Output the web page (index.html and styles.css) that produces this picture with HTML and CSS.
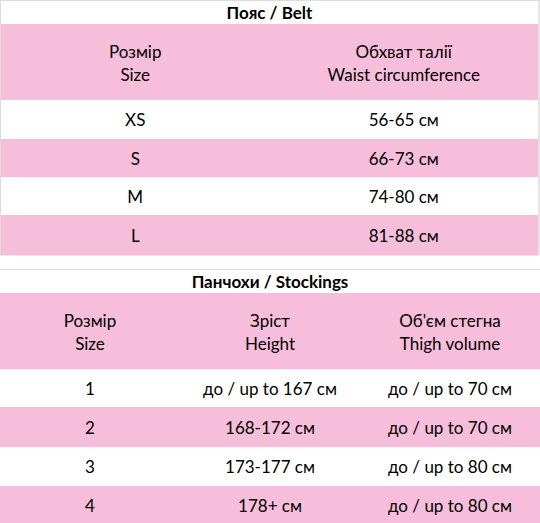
FILE: index.html
```html
<!DOCTYPE html>
<html lang="uk">
<head>
<meta charset="utf-8">
<title>Size chart</title>
<link rel="stylesheet" href="styles.css">
</head>
<body>
<section class="table belt">
  <div class="title">Пояс / Belt</div>
  <div class="row head cols-2">
    <div class="cell">Розмір<br>Size</div>
    <div class="cell">Обхват талії<br>Waist circumference</div>
  </div>
  <div class="row cols-2 r1"><div class="cell">XS</div><div class="cell">56-65 см</div></div>
  <div class="row cols-2 pink r2"><div class="cell">S</div><div class="cell">66-73 см</div></div>
  <div class="row cols-2 r3"><div class="cell">M</div><div class="cell">74-80 см</div></div>
  <div class="row cols-2 pink r4"><div class="cell">L</div><div class="cell">81-88 см</div></div>
</section>
<div class="spacer"></div>
<section class="table stockings">
  <div class="title">Панчохи / Stockings</div>
  <div class="row head cols-3">
    <div class="cell">Розмір<br>Size</div>
    <div class="cell">Зріст<br>Height</div>
    <div class="cell">Об'єм стегна<br>Thigh volume</div>
  </div>
  <div class="row cols-3 s1"><div class="cell">1</div><div class="cell">до / up to 167 см</div><div class="cell">до / up to 70 см</div></div>
  <div class="row cols-3 pink s2"><div class="cell">2</div><div class="cell">168-172 см</div><div class="cell">до / up to 70 см</div></div>
  <div class="row cols-3 s3"><div class="cell">3</div><div class="cell">173-177 см</div><div class="cell">до / up to 80 см</div></div>
  <div class="row cols-3 pink s4"><div class="cell">4</div><div class="cell">178+ см</div><div class="cell">до / up to 80 см</div></div>
</section>
</body>
</html>
```
FILE: styles.css
```css
html, body {
  margin: 0;
  padding: 0;
  background: #ffffff;
}
body {
  width: 540px;
  font-family: "Lato", "Noto Sans", sans-serif;
  font-size: 17px;
  color: #000000;
}
.table {
  display: flex;
  flex-direction: column;
}
.belt {
  border-top: 1px solid #dcdcdc;
  border-left: 1px solid #dcdcdc;
  border-right: 2px solid #e4e4e4;
}
.stockings {
  border-top: 1px solid #dcdcdc;
}
.spacer {
  height: 13px;
  border-top: 1px solid #fbe3ee;
}
.title {
  height: 23px;
  display: flex;
  align-items: center;
  justify-content: center;
  font-weight: 700;
}
.row {
  display: grid;
  align-items: center;
  text-align: center;
}
.cols-2 { grid-template-columns: 1fr 1fr; }
.cols-3 { grid-template-columns: 1fr 1fr 1fr; }
.head {
  background: #f6bedb;
  height: 76px;
  line-height: 23px;
  padding-top: 2px;
  box-sizing: border-box;
}
.pink {
  background: #f6bedb;
}
.r1 { height: 39px; }
.r2 { height: 38px; }
.r3 { height: 38px; }
.r4 { height: 40px; }
.s1 { height: 38px; }
.s2 { height: 40px; }
.s3 { height: 39px; }
.s4 { height: 38px; }
```
